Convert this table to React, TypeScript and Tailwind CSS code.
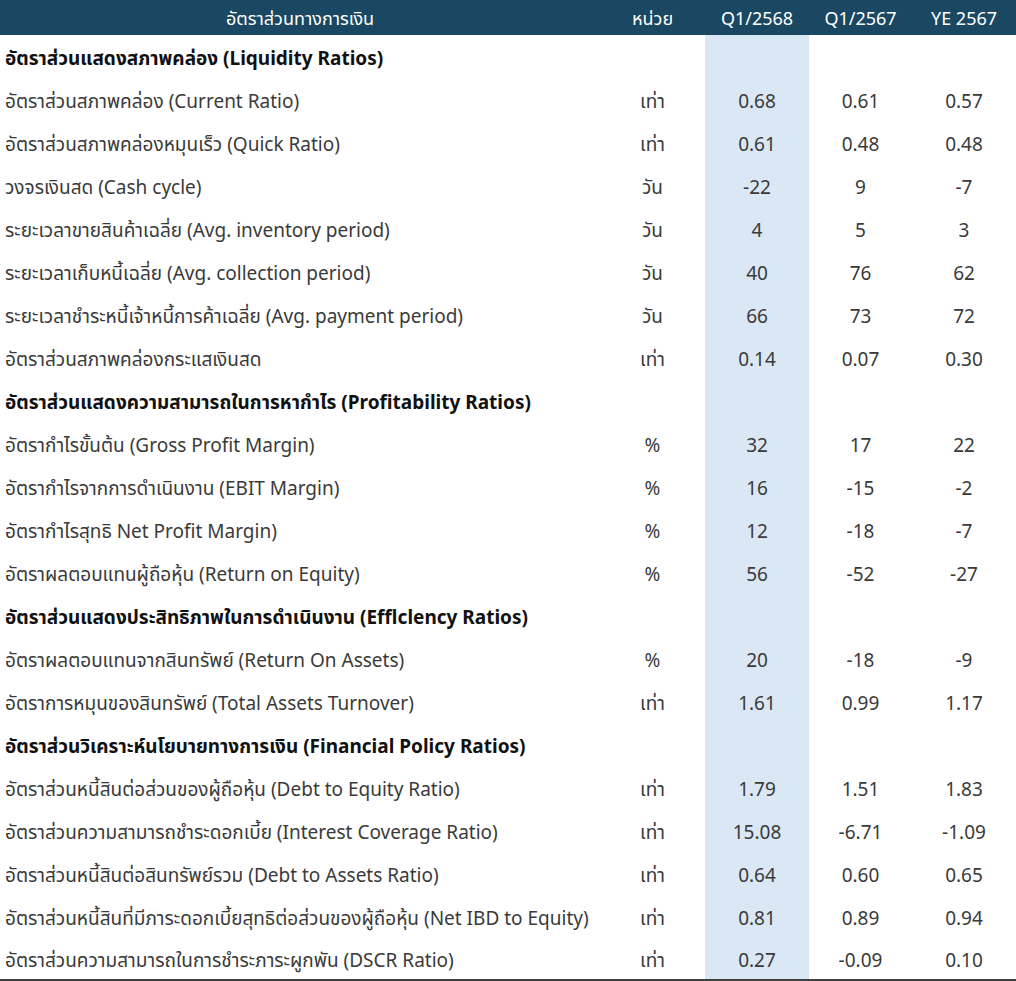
type Row =
  | { kind: "section"; label: string }
  | { kind: "item"; label: string; unit: string; q168: string; q167: string; ye67: string };

const rows: Row[] = [
  { kind: "section", label: "อัตราส่วนแสดงสภาพคล่อง (Liquidity Ratios)" },
  { kind: "item", label: "อัตราส่วนสภาพคล่อง (Current Ratio)", unit: "เท่า", q168: "0.68", q167: "0.61", ye67: "0.57" },
  { kind: "item", label: "อัตราส่วนสภาพคล่องหมุนเร็ว (Quick Ratio)", unit: "เท่า", q168: "0.61", q167: "0.48", ye67: "0.48" },
  { kind: "item", label: "วงจรเงินสด (Cash cycle)", unit: "วัน", q168: "-22", q167: "9", ye67: "-7" },
  { kind: "item", label: "ระยะเวลาขายสินค้าเฉลี่ย (Avg. inventory period)", unit: "วัน", q168: "4", q167: "5", ye67: "3" },
  { kind: "item", label: "ระยะเวลาเก็บหนี้เฉลี่ย (Avg. collection period)", unit: "วัน", q168: "40", q167: "76", ye67: "62" },
  { kind: "item", label: "ระยะเวลาชำระหนี้เจ้าหนี้การค้าเฉลี่ย (Avg. payment period)", unit: "วัน", q168: "66", q167: "73", ye67: "72" },
  { kind: "item", label: "อัตราส่วนสภาพคล่องกระแสเงินสด", unit: "เท่า", q168: "0.14", q167: "0.07", ye67: "0.30" },
  { kind: "section", label: "อัตราส่วนแสดงความสามารถในการหากำไร (Profitability Ratios)" },
  { kind: "item", label: "อัตรากำไรขั้นต้น (Gross Profit Margin)", unit: "%", q168: "32", q167: "17", ye67: "22" },
  { kind: "item", label: "อัตรากำไรจากการดำเนินงาน (EBIT Margin)", unit: "%", q168: "16", q167: "-15", ye67: "-2" },
  { kind: "item", label: "อัตรากำไรสุทธิ Net Profit Margin)", unit: "%", q168: "12", q167: "-18", ye67: "-7" },
  { kind: "item", label: "อัตราผลตอบแทนผู้ถือหุ้น (Return on Equity)", unit: "%", q168: "56", q167: "-52", ye67: "-27" },
  { kind: "section", label: "อัตราส่วนแสดงประสิทธิภาพในการดำเนินงาน (Efflclency Ratios)" },
  { kind: "item", label: "อัตราผลตอบแทนจากสินทรัพย์ (Return On Assets)", unit: "%", q168: "20", q167: "-18", ye67: "-9" },
  { kind: "item", label: "อัตราการหมุนของสินทรัพย์ (Total Assets Turnover)", unit: "เท่า", q168: "1.61", q167: "0.99", ye67: "1.17" },
  { kind: "section", label: "อัตราส่วนวิเคราะห์นโยบายทางการเงิน (Financial Policy Ratios)" },
  { kind: "item", label: "อัตราส่วนหนี้สินต่อส่วนของผู้ถือหุ้น (Debt to Equity Ratio)", unit: "เท่า", q168: "1.79", q167: "1.51", ye67: "1.83" },
  { kind: "item", label: "อัตราส่วนความสามารถชำระดอกเบี้ย (Interest Coverage Ratio)", unit: "เท่า", q168: "15.08", q167: "-6.71", ye67: "-1.09" },
  { kind: "item", label: "อัตราส่วนหนี้สินต่อสินทรัพย์รวม (Debt to Assets Ratio)", unit: "เท่า", q168: "0.64", q167: "0.60", ye67: "0.65" },
  { kind: "item", label: "อัตราส่วนหนี้สินที่มีภาระดอกเบี้ยสุทธิต่อส่วนของผู้ถือหุ้น (Net IBD to Equity)", unit: "เท่า", q168: "0.81", q167: "0.89", ye67: "0.94" },
  { kind: "item", label: "อัตราส่วนความสามารถในการชำระภาระผูกพัน (DSCR Ratio)", unit: "เท่า", q168: "0.27", q167: "-0.09", ye67: "0.10" },
];

const grid = "grid grid-cols-[600px_105px_104px_103px_104px]";

export default function App() {
  return (
    <div
      className="w-[1016px] bg-white text-[#3a3a3a] text-[19px]"
      style={{ fontFamily: '"Noto Sans", "Noto Sans Thai", "Noto Sans CJK SC", sans-serif' }}
    >
      <div className={`${grid} h-[35px] items-center bg-[#1a4761] text-white text-[18px] pt-[1px]`}>
        <div className="text-center">อัตราส่วนทางการเงิน</div>
        <div className="text-center">หน่วย</div>
        <div className="text-center">Q1/2568</div>
        <div className="text-center">Q1/2567</div>
        <div className="text-center">YE 2567</div>
      </div>
      {rows.map((r, i) => {
        const last = i === rows.length - 1;
        const border = last ? "border-b-2 border-[#404040]" : "";
        if (r.kind === "section") {
          return (
            <div key={i} className={`${grid} h-[43px] ${border}`}>
              <div className="flex items-center pl-[5px] pt-[4px] font-bold text-[#111] whitespace-nowrap">{r.label}</div>
              <div />
              <div className="bg-[#dae7f5]" />
              <div />
              <div />
            </div>
          );
        }
        return (
          <div key={i} className={`${grid} h-[43px] ${border}`}>
            <div className="flex items-center pl-[5px] pt-[4px] whitespace-nowrap">{r.label}</div>
            <div className="flex items-center justify-center pt-[4px]">{r.unit}</div>
            <div className="flex items-center justify-center pt-[4px] bg-[#dae7f5]">{r.q168}</div>
            <div className="flex items-center justify-center pt-[4px]">{r.q167}</div>
            <div className="flex items-center justify-center pt-[4px]">{r.ye67}</div>
          </div>
        );
      })}
    </div>
  );
}
